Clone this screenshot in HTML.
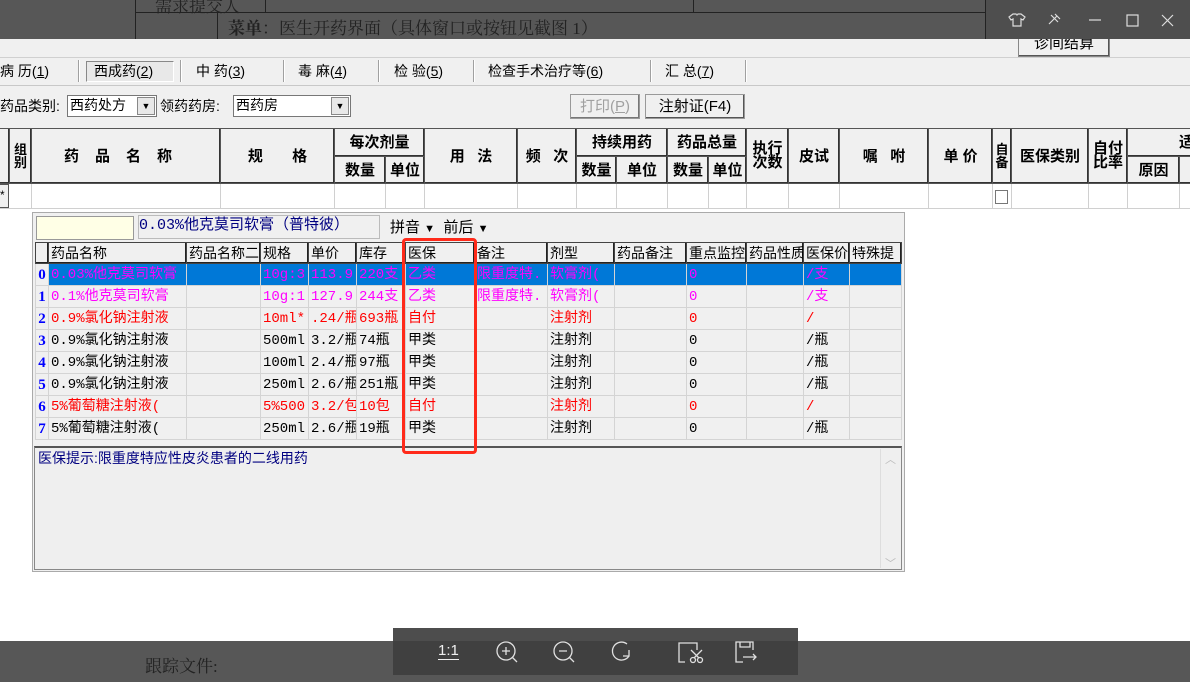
<!DOCTYPE html>
<html><head><meta charset="utf-8"><style>
*{margin:0;padding:0;box-sizing:border-box}
body{width:1190px;height:682px;overflow:hidden;position:relative;background:#fff;font-family:"Liberation Sans","Noto Sans CJK SC",sans-serif;font-size:14px;color:#000}
.a{position:absolute}
.tab{position:absolute;top:60px;height:22px;line-height:22px;font-size:14px;white-space:nowrap}
.sep{position:absolute;top:60px;width:2px;height:22px;border-left:1px solid #a0a0a0;border-right:1px solid #fff}
table{border-collapse:collapse;table-layout:fixed}
.hd td{border:1px solid #555;background:#f0f0f0;font-weight:bold;text-align:center;font-size:15px;line-height:15px;padding:0;overflow:hidden;white-space:nowrap;box-shadow:inset -1px -1px 0 #333}
.pg td{border:1px solid #d4d4d4;height:22px;padding:0 2px;white-space:nowrap;overflow:hidden;font-size:14px;line-height:20px;font-family:"Liberation Mono","Noto Sans CJK SC",monospace}
.pg tr.h td{background:#f0f0f0;border:1px solid #444;box-shadow:inset -1px -1px 0 #222;font-family:"Liberation Sans","Noto Sans CJK SC",sans-serif;height:21px}
.pg td.i{color:#0000ff;font-weight:bold;background:#f0f0f0;padding:0;text-align:center;font-family:"Liberation Serif",serif;font-size:15px}
.m td{color:#ff00ff}.r td{color:#ff0000}
.s td{background:#0078d7;color:#ff00ff;border-top:1px dotted #c07020;border-bottom:1px dotted #c07020}
.pg td.i{color:#0000ff}
</style></head><body>
<div class="a" style="left:0;top:0;width:1190px;height:39px;background:#575757"></div>
<div class="a" style="left:135px;top:0;width:1px;height:39px;background:#222"></div>
<div class="a" style="left:217px;top:12px;width:1px;height:27px;background:#222"></div>
<div class="a" style="left:135px;top:12px;width:1055px;height:1px;background:#222"></div>
<div class="a" style="left:265px;top:0;width:1px;height:12px;background:#222"></div>
<div class="a" style="left:693px;top:0;width:1px;height:12px;background:#222"></div>
<div class="a" style="left:985px;top:0;width:1px;height:39px;background:#222"></div>
<div class="a" style="left:155px;top:-8px;font-size:17px;color:#222;font-family:'Liberation Serif','Noto Serif CJK SC',serif">需求提交人</div>
<div class="a" style="left:228px;top:14px;font-size:17px;color:#222;font-family:'Liberation Serif','Noto Serif CJK SC',serif"><b>菜单</b>：医生开药界面（具体窗口或按钮见截图 1）</div>
<div class="a" style="left:986px;top:0;width:204px;height:39px;background:#4e4e4e"></div>
<svg class="a" style="left:1005px;top:10px" width="180" height="20" fill="none" stroke="#ddd" stroke-width="1.2">
<path d="M11 4 L8 4 L4 7 L6 10 L8 9 L8 16 L16 16 L16 9 L18 10 L20 7 L16 4 L13 4 Q12 6 11 4Z"/>
<path d="M46 5 L53 12 M47 11 L52 6 M49 9 L44 14 M50 4 L55 9"/>
<path d="M84 10 H96"/>
<rect x="122" y="5" width="11" height="11"/>
<path d="M157 5 L168 16 M168 5 L157 16"/>
</svg>
<div class="a" style="left:0;top:39px;width:1190px;height:170px;background:#f0f0f0"></div>
<div class="a" style="left:1018px;top:39px;width:92px;height:18px;background:#f0f0f0;border:1px solid #888;border-top:none;box-shadow:inset -1px -1px 0 #555;text-align:center;font-size:15px;line-height:10px;overflow:hidden">诊间结算</div>
<div class="a" style="left:0;top:57px;width:1190px;height:1px;background:#d0d0d0"></div>
<div class="tab" style="left:0">病 历(<u>1</u>)</div>
<div class="sep" style="left:78px"></div>
<div class="a" style="left:86px;top:61px;width:88px;height:21px;border:1px solid #888;border-right-color:#fff;border-bottom-color:#fff;background:#e8e8e8"></div>
<div class="tab" style="left:94px">西成药(<u>2</u>)</div>
<div class="sep" style="left:180px"></div>
<div class="tab" style="left:196px">中 药(<u>3</u>)</div>
<div class="sep" style="left:283px"></div>
<div class="tab" style="left:298px">毒 麻(<u>4</u>)</div>
<div class="sep" style="left:378px"></div>
<div class="tab" style="left:394px">检 验(<u>5</u>)</div>
<div class="sep" style="left:473px"></div>
<div class="tab" style="left:488px">检查手术治疗等(<u>6</u>)</div>
<div class="sep" style="left:650px"></div>
<div class="tab" style="left:665px">汇 总(<u>7</u>)</div>
<div class="sep" style="left:745px"></div>
<div class="a" style="left:0;top:85px;width:1190px;height:1px;background:#c8c8c8"></div>
<div class="a" style="left:0;top:96px;font-size:14px;line-height:20px">药品类别:</div>
<div class="a" style="left:67px;top:95px;width:90px;height:22px;background:#fff;border:1px solid #777;font-size:14px;line-height:19px;padding-left:2px">西药处方</div>
<div class="a" style="left:137px;top:97px;width:18px;height:18px;background:#e8e8e8;border:1px solid #888;font-size:9px;text-align:center;line-height:17px">▼</div>
<div class="a" style="left:160px;top:96px;font-size:14px;line-height:20px">领药药房:</div>
<div class="a" style="left:233px;top:95px;width:118px;height:22px;background:#fff;border:1px solid #777;font-size:14px;line-height:19px;padding-left:2px">西药房</div>
<div class="a" style="left:331px;top:97px;width:18px;height:18px;background:#e8e8e8;border:1px solid #888;font-size:9px;text-align:center;line-height:17px">▼</div>
<div class="a" style="left:570px;top:94px;width:70px;height:25px;border:1px solid #999;box-shadow:inset -1px -1px 0 #777;color:#a0a0a0;font-size:15px;line-height:23px;text-align:center">打印(<u>P</u>)</div>
<div class="a" style="left:645px;top:94px;width:100px;height:25px;border:1px solid #999;box-shadow:inset -1px -1px 0 #555;font-size:15px;line-height:23px;text-align:center">注射证(F4)</div>
<table class="hd a" style="left:-1px;top:128px;width:1195px">
<colgroup><col style="width:10px"><col style="width:22px"><col style="width:189px"><col style="width:114px"><col style="width:51px"><col style="width:39px"><col style="width:93px"><col style="width:59px"><col style="width:40px"><col style="width:51px"><col style="width:41px"><col style="width:38px"><col style="width:42px"><col style="width:51px"><col style="width:89px"><col style="width:64px"><col style="width:19px"><col style="width:77px"><col style="width:39px"><col style="width:52px"><col style="width:15px"></colgroup>
<tr style="height:28px"><td rowspan="2"></td><td rowspan="2" style="font-size:13px;line-height:13px">组<br>别</td><td rowspan="2" style="letter-spacing:16px">药品名称</td><td rowspan="2">规&nbsp;&nbsp;&nbsp;&nbsp;&nbsp;&nbsp;&nbsp;格</td><td colspan="2">每次剂量</td><td rowspan="2">用&nbsp;&nbsp;&nbsp;法</td><td rowspan="2">频&nbsp;&nbsp;&nbsp;次</td><td colspan="2">持续用药</td><td colspan="2">药品总量</td><td rowspan="2" style="line-height:14px">执行<br>次数</td><td rowspan="2">皮试</td><td rowspan="2">嘱&nbsp;&nbsp;&nbsp;咐</td><td rowspan="2">单 价</td><td rowspan="2" style="font-size:13px;line-height:13px">自<br>备</td><td rowspan="2">医保类别</td><td rowspan="2" style="line-height:14px">自付<br>比率</td><td colspan="2" style="text-align:right">适</td></tr>
<tr style="height:27px"><td>数量</td><td>单位</td><td>数量</td><td>单位</td><td>数量</td><td>单位</td><td>原因</td><td></td></tr>
</table>
<div class="a" style="left:0;top:184px;width:1190px;height:25px;background:#fff"></div>
<div class="a" style="left:-1px;top:184px;width:10px;height:24px;border:1px solid #555;background:#f0f0f0;font-size:12px;line-height:20px">*</div>
<svg class="a" style="left:0;top:184px" width="1190" height="25"><g stroke="#d0d0d0"><path d="M31.5 0V24M220.5 0V24M334.5 0V24M385.5 0V24M424.5 0V24M517.5 0V24M576.5 0V24M616.5 0V24M667.5 0V24M708.5 0V24M746.5 0V24M788.5 0V24M839.5 0V24M928.5 0V24M992.5 0V24M1011.5 0V24M1088.5 0V24M1127.5 0V24M1179.5 0V24M0 24.5H1190"/></g><rect x="995.5" y="6.5" width="12" height="13" fill="#fff" stroke="#777"/></svg>
<div class="a" style="left:32px;top:212px;width:873px;height:360px;background:#f0f0f0;border:1px solid #aaa"></div>
<div class="a" style="left:36px;top:216px;width:98px;height:24px;background:#ffffe6;border:1px solid #999"></div>
<div class="a" style="left:138px;top:215px;width:242px;height:24px;border:1px solid #bbb;color:#000080;font-size:15px;line-height:20px;font-family:'Liberation Mono','Noto Sans CJK SC',monospace;white-space:nowrap;overflow:hidden">0.03%他克莫司软膏（普特彼）</div>
<div class="a" style="left:390px;top:218px;font-size:15px;line-height:20px">拼音 <span style="font-size:11px">▼</span>&nbsp; 前后 <span style="font-size:11px">▼</span></div>
<table class="pg a" style="left:35px;top:242px;width:866px">
<colgroup><col style="width:13px"><col style="width:138px"><col style="width:74px"><col style="width:48px"><col style="width:48px"><col style="width:49px"><col style="width:69px"><col style="width:73px"><col style="width:67px"><col style="width:72px"><col style="width:60px"><col style="width:57px"><col style="width:46px"><col style="width:52px"></colgroup>
<tr class="h"><td class="i"></td><td>药品名称</td><td>药品名称二</td><td>规格</td><td>单价</td><td>库存</td><td>医保</td><td>备注</td><td>剂型</td><td>药品备注</td><td>重点监控</td><td>药品性质</td><td>医保价</td><td>特殊提</td></tr>
<tr class="s"><td class="i">0</td><td>0.03%他克莫司软膏</td><td></td><td>10g:3</td><td>113.9</td><td>220支</td><td>乙类</td><td>限重度特.</td><td>软膏剂(</td><td></td><td>0</td><td></td><td>/支</td><td></td></tr>
<tr class="m"><td class="i">1</td><td>0.1%他克莫司软膏</td><td></td><td>10g:1</td><td>127.9</td><td>244支</td><td>乙类</td><td>限重度特.</td><td>软膏剂(</td><td></td><td>0</td><td></td><td>/支</td><td></td></tr>
<tr class="r"><td class="i">2</td><td>0.9%氯化钠注射液</td><td></td><td>10ml*</td><td>.24/瓶</td><td>693瓶</td><td>自付</td><td></td><td>注射剂</td><td></td><td>0</td><td></td><td>/</td><td></td></tr>
<tr><td class="i">3</td><td>0.9%氯化钠注射液</td><td></td><td>500ml</td><td>3.2/瓶</td><td>74瓶</td><td>甲类</td><td></td><td>注射剂</td><td></td><td>0</td><td></td><td>/瓶</td><td></td></tr>
<tr><td class="i">4</td><td>0.9%氯化钠注射液</td><td></td><td>100ml</td><td>2.4/瓶</td><td>97瓶</td><td>甲类</td><td></td><td>注射剂</td><td></td><td>0</td><td></td><td>/瓶</td><td></td></tr>
<tr><td class="i">5</td><td>0.9%氯化钠注射液</td><td></td><td>250ml</td><td>2.6/瓶</td><td>251瓶</td><td>甲类</td><td></td><td>注射剂</td><td></td><td>0</td><td></td><td>/瓶</td><td></td></tr>
<tr class="r"><td class="i">6</td><td>5%葡萄糖注射液(</td><td></td><td>5%500</td><td>3.2/包</td><td>10包</td><td>自付</td><td></td><td>注射剂</td><td></td><td>0</td><td></td><td>/</td><td></td></tr>
<tr><td class="i">7</td><td>5%葡萄糖注射液(</td><td></td><td>250ml</td><td>2.6/瓶</td><td>19瓶</td><td>甲类</td><td></td><td>注射剂</td><td></td><td>0</td><td></td><td>/瓶</td><td></td></tr>
</table>
<div class="a" style="left:34px;top:446px;width:868px;height:124px;border:1px solid #888;border-top:2px solid #555;background:#efefef;color:#000080;font-size:14px;line-height:20px;padding-left:3px">医保提示:限重度特应性皮炎患者的二线用药</div>
<div class="a" style="left:880px;top:449px;width:20px;height:119px;border-left:1px solid #ddd;color:#bbb;font-size:11px;text-align:center"><div style="margin-top:2px">︿</div><div style="margin-top:88px">﹀</div></div>
<div class="a" style="left:402px;top:238px;width:75px;height:216px;border:3px solid #ff2a1a;border-radius:4px"></div>
<div class="a" style="left:0;top:641px;width:1190px;height:41px;background:#575757"></div>
<div class="a" style="left:145px;top:652px;font-size:17px;color:#222;font-family:'Liberation Serif','Noto Serif CJK SC',serif">跟踪文件:</div>
<div class="a" style="left:393px;top:628px;width:405px;height:47px;background:#404040"></div>
<div class="a" style="left:393px;top:628px;width:405px;height:13px;background:#4d4d4d"></div>
<div class="a" style="left:438px;top:642px;color:#eee;font-size:15px;border-bottom:1px solid #eee;line-height:17px">1:1</div>
<svg class="a" style="left:490px;top:638px" width="270" height="30" fill="none" stroke="#e0e0e0" stroke-width="1.3">
<circle cx="16" cy="13" r="9"/><path d="M22.5 19.5L27 24M12 13H20M16 9V17"/>
<circle cx="73" cy="13" r="9"/><path d="M79.5 19.5L84 24M69 13H77"/>
<path d="M137 6A9 9 0 1 0 139 18M139 12V18H133"/>
<path d="M195 24H189V5H207V12M189 24"/><circle cx="203" cy="22" r="2.5"/><circle cx="210" cy="22" r="2.5"/><path d="M201 12L209 20M212 12L204 20"/>
<path d="M253 24H246V4H263V12M250 4V9H260V4M253 19H266M263 16L266 19L263 22"/>
</svg>
</body></html>
